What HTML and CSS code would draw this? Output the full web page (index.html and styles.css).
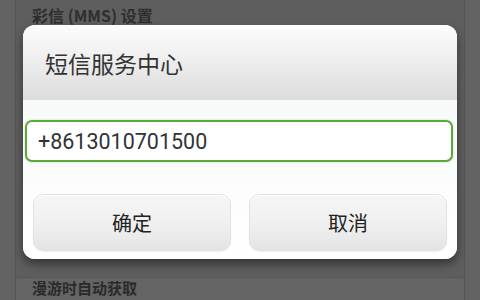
FILE: index.html
```html
<!DOCTYPE html>
<html lang="zh-CN">

<head>
    <meta charset="UTF-8">
    <meta name="viewport" content="width=device-width, initial-scale=1.0">
    <title>短信服务中心</title>
    <link rel="stylesheet" href="styles.css">
</head>

<body>
    <div class="settings">
        <div class="section-title">彩信 (MMS) 设置</div>
        <div class="rows"></div>
        <div class="row-next">漫游时自动获取</div>
    </div>

    <div class="dialog">
        <div class="dialog-title">短信服务中心</div>
        <div class="dialog-body">
            <input type="text" class="number-input" value="+8613010701500">
            <div class="buttons">
                <button class="btn">确定</button>
                <button class="btn">取消</button>
            </div>
        </div>
    </div>
</body>

</html>
```

FILE: styles.css
```css
:root {
    --bg-color: #5e5e5e;
    --bg-outer: #636363;
    --line-color: #555555;
    --text-dark: #2e2e2e;
    --text-primary: #333333;
    --accent-green: #5aa83c;
    --font-cjk: "Noto Sans CJK SC", "Noto Sans", sans-serif;
}

body {
    margin: 0;
    width: 480px;
    height: 300px;
    overflow: hidden;
    background-color: var(--bg-outer);
    font-family: var(--font-cjk);
}

.settings {
    margin: 0 15px;
    height: 300px;
    background-color: var(--bg-color);
    border-left: 1px solid var(--line-color);
    border-right: 1px solid var(--line-color);
    display: flex;
    flex-direction: column;
}

.section-title {
    padding: 4px 0 0 16px;
    height: 26px;
    font-size: 16px;
    font-weight: bold;
    color: var(--text-dark);
    line-height: 22px;
}

.rows {
    height: 247px;
    border-bottom: 1px solid #575757;
}

.row-next {
    flex: 1;
    background-color: #646464;
    padding: 1px 0 0 16px;
    font-size: 15px;
    font-weight: bold;
    color: #2a2a2a;
    line-height: 17px;
}

.dialog {
    position: absolute;
    left: 23px;
    top: 25px;
    width: 434px;
    height: 234px;
    border-radius: 12px;
    background-color: #fafafa;
    box-shadow: 0 5px 10px rgba(0, 0, 0, 0.45);
    display: flex;
    flex-direction: column;
    overflow: hidden;
}

.dialog-title {
    height: 75px;
    padding-left: 22px;
    display: flex;
    align-items: center;
    font-size: 23px;
    color: var(--text-primary);
    background: linear-gradient(#fdfdfd, #f0f0f0 40%, #dcdcdc);
}

.dialog-body {
    flex: 1;
    padding: 20px 4px 0 2px;
    display: flex;
    flex-direction: column;
    background: linear-gradient(#f8f9f9, #ffffff);
}

.number-input {
    height: 42px;
    box-sizing: border-box;
    border: 2px solid var(--accent-green);
    border-radius: 7px;
    padding: 0 0 0 11px;
    font-family: Roboto, "Noto Sans", sans-serif;
    font-size: 21.5px;
    color: var(--text-primary);
    background-color: #ffffff;
    box-shadow: 0 0 2px rgba(90, 168, 60, 0.4);
    outline: none;
}

.buttons {
    display: flex;
    gap: 18px;
    margin: 32px 6px 0 8px;
}

.btn {
    flex: 1;
    height: 57px;
    border: 1px solid #e2e2e2;
    border-radius: 10px;
    background: linear-gradient(#f6f6f6, #eeeeee 60%, #e4e4e4);
    box-shadow: inset 0 1px 0 #ffffff, 0 1px 1px rgba(0, 0, 0, 0.06);
    font-family: var(--font-cjk);
    font-size: 20px;
    color: #222222;
    padding: 0;
}
```
